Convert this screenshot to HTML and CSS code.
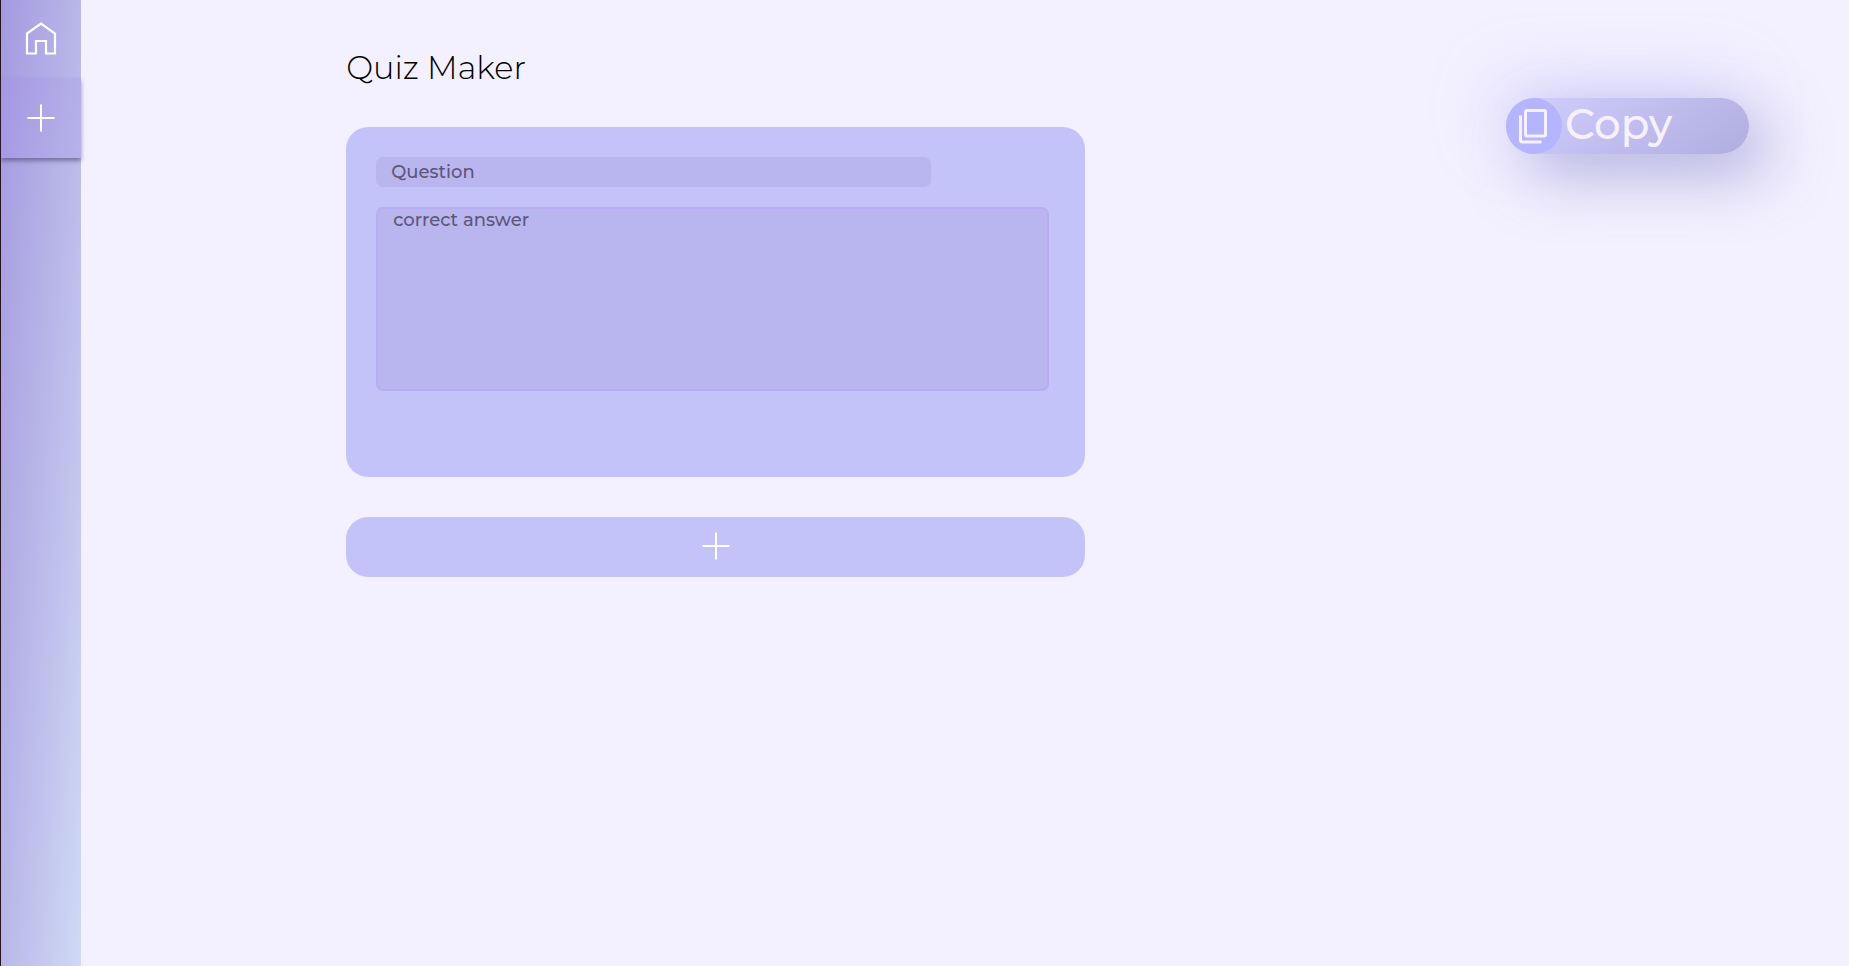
FILE: index.html
```html
<!DOCTYPE html>
<html lang="en">
<head>
<meta charset="utf-8">
<title>Quiz Maker</title>
<link rel="stylesheet" href="styles.css">
</head>
<body>
<div class="app">
  <nav class="sidebar" aria-label="Main">
    <a class="nav-link" href="#home" aria-label="Home">
      <svg class="nav-icon" viewBox="0 0 32 36" aria-hidden="true"><path d="M2 12.500L16 2.500L30 12.500V32.500H21V20H11V32.500H2Z"/></svg>
    </a>
    <a class="nav-link active" href="#create" aria-label="Create quiz">
      <svg class="plus-icon" viewBox="0 0 28 28" aria-hidden="true"><path d="M14 .5V27.500M.5 14H27.500"/></svg>
    </a>
  </nav>
  <main class="content">
    <section class="editor">
      <h1 class="title">Quiz Maker</h1>
      <form class="card">
        <input class="question" type="text" placeholder="Question" aria-label="Question">
        <textarea class="answer" placeholder="correct answer" aria-label="Correct answer"></textarea>
      </form>
      <button class="add" type="button" aria-label="Add question">
        <svg class="plus-icon" viewBox="0 0 28 28" aria-hidden="true"><path d="M14 .5V27.500M.5 14H27.500"/></svg>
      </button>
    </section>
    <button class="copy" type="button">
      <span class="copy-badge">
        <svg class="copy-icon" viewBox="0 0 30 36" aria-hidden="true"><rect x="7.500" y="2.500" width="20" height="25.500" rx="1.500"/><path d="M2.500 7.500V32Q2.500 34 4.500 34H23.500"/></svg>
      </span>
      <span class="copy-label">Copy</span>
    </button>
  </main>
</div>
</body>
</html>
```

FILE: styles.css
```css
* {
  box-sizing: border-box;
}

body {
  margin: 0;
  background: #f3f0ff;
  font-family: Montserrat, Inter, sans-serif;
}

.app {
  display: flex;
  min-height: 100vh;
}

.sidebar {
  flex: 0 0 81px;
  border-left: 1px solid #24141f;
  background: linear-gradient(to bottom right, #a499df, #b9b7e9 50%, #cfdaf5);
}

.nav-link {
  display: flex;
  align-items: center;
  justify-content: center;
  height: 78px;
}

.nav-link.active {
  height: 80px;
  background: linear-gradient(100deg, #a497e2, #b7b3e9);
  box-shadow: 0 3px 4px rgba(60, 55, 100, 0.5);
}

.nav-icon {
  width: 32px;
  height: 36px;
  fill: none;
  stroke: #fff;
  stroke-width: 2.2;
}

.plus-icon {
  width: 28px;
  height: 28px;
  fill: none;
  stroke: #fff;
  stroke-width: 2;
}

.content {
  flex: 1;
  display: flex;
  justify-content: space-between;
  align-items: flex-start;
  padding-right: 100px;
}

.editor {
  width: 44.3%;
  margin-left: 15.9%;
  padding-top: 48px;
}

.title {
  margin: 0 0 40px;
  font-size: 32px;
  line-height: 39px;
  font-weight: 300;
  color: #000;
}

.card {
  display: flex;
  flex-direction: column;
  gap: 20px;
  min-height: 350px;
  padding: 30px;
  border-radius: 22px;
  background: #c4c3f9;
}

.question,
.answer {
  border: 0;
  border-radius: 7px;
  outline: 0;
  background: #b9b5ef;
  color: #554d70;
  font: 500 18px/22px Montserrat, Inter, sans-serif;
}

.question {
  width: 555px;
  max-width: 100%;
  height: 30px;
  padding: 0 15px;
}

.answer {
  width: 673px;
  max-width: 100%;
  height: 184px;
  padding: 0 15px;
  border: 2px solid #b7adf0;
  resize: none;
}

.question::placeholder,
.answer::placeholder {
  color: #5d5779;
  opacity: 1;
}

.add {
  display: flex;
  align-items: center;
  justify-content: center;
  width: 100%;
  height: 60px;
  margin-top: 40px;
  padding: 0 0 2px;
  border: 0;
  border-radius: 22px;
  background: #c4c3f9;
}

.copy {
  display: flex;
  align-items: center;
  gap: 3px;
  width: 243px;
  height: 56px;
  margin-top: 98px;
  padding: 0;
  border: 0;
  border-radius: 28px;
  background: linear-gradient(145deg, #d2d0ff, #b0addf);
  box-shadow: 20px 20px 60px rgba(120, 118, 190, 0.5), -10px -16px 60px rgba(205, 203, 255, 0.5);
  color: #f7f0ff;
  font: 500 42px/52px Montserrat, Inter, sans-serif;
}

.copy-label {
  padding-bottom: 4px;
}

.copy-badge {
  display: flex;
  align-items: center;
  justify-content: center;
  width: 56px;
  height: 56px;
  padding-right: 2px;
  border-radius: 50%;
  background: #b5b4ff;
}

.copy-icon {
  width: 30px;
  height: 36px;
  fill: none;
  stroke: #f7f0ff;
  stroke-width: 3;
}
```
